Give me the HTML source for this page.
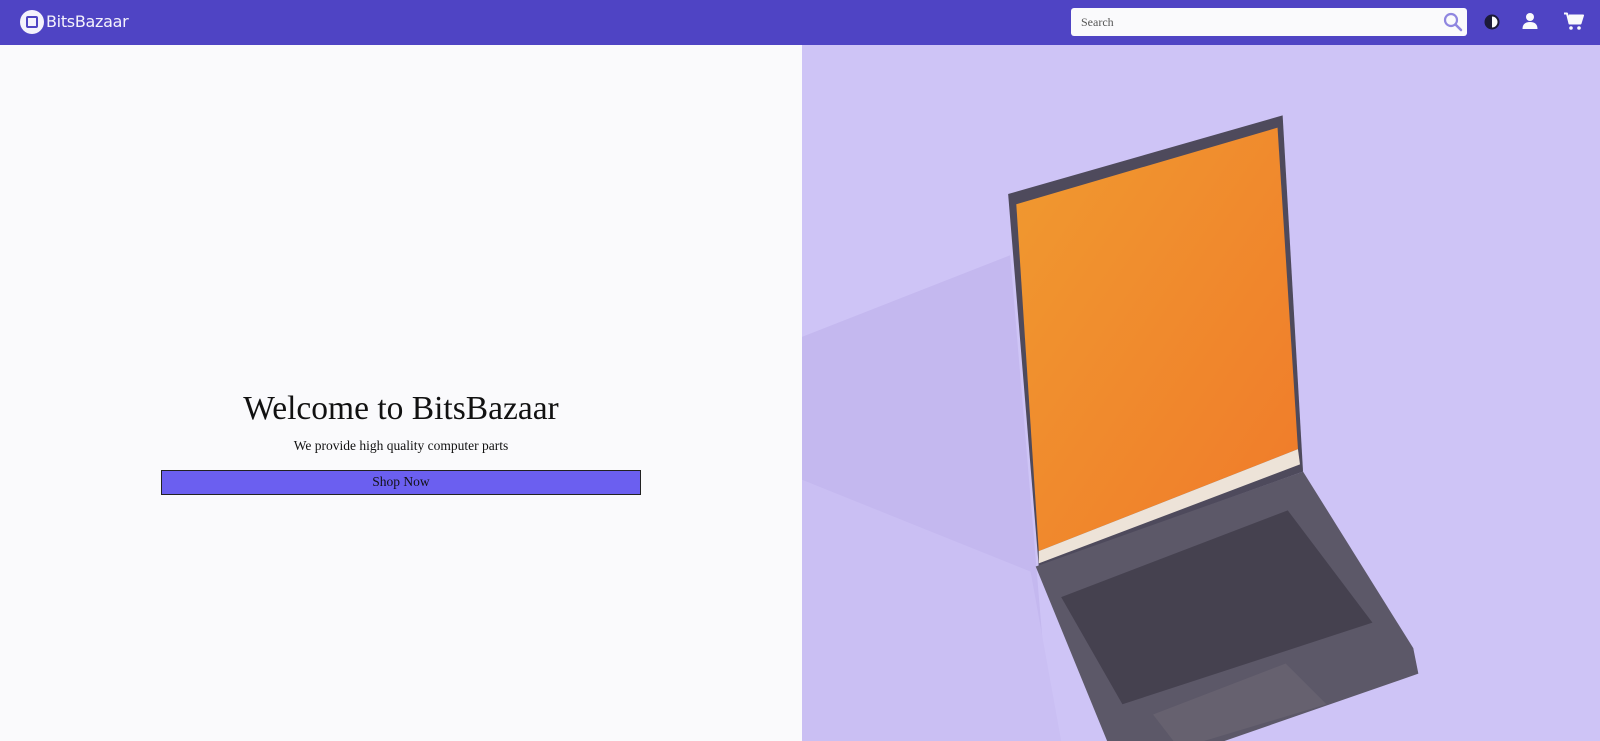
<!DOCTYPE html>
<html><head><meta charset="utf-8"><style>
*{margin:0;padding:0;box-sizing:border-box}
body{width:1600px;height:741px;overflow:hidden;background:#fafafc;font-family:"Liberation Serif",serif;position:relative}
.nav{position:absolute;left:0;top:0;width:1600px;height:45px;background:#4f44c4}
.logo{position:absolute;left:20px;top:10px;width:24px;height:24px;border-radius:50%;background:#f4f2fc}
.logo i{position:absolute;left:6px;top:6px;width:12px;height:12px;border:2px solid #4f44c4;border-radius:2px}
.brand{position:absolute;left:46px;top:12px;color:#f4f2fc;font:16px "DejaVu Sans","Liberation Sans",sans-serif;letter-spacing:-0.3px}
.search{position:absolute;left:1071px;top:8px;width:396px;height:28px;background:#fafafc;border-radius:3px}
.search span{position:absolute;left:10px;top:7px;font-size:12px;color:#555}
h1{position:absolute;left:0;width:802px;top:389px;text-align:center;font-weight:normal;font-size:33.5px;line-height:40px;color:#111}
p{position:absolute;left:0;width:802px;top:438px;text-align:center;font-size:13.5px;line-height:16px;color:#111}
.btn{position:absolute;left:161px;top:470px;width:480px;height:25px;background:#6b5ff0;border:1.5px solid #222;text-align:center;font-size:13.5px;line-height:22px;color:#111}
svg.hero{position:absolute;left:802px;top:45px}
</style></head><body>
<div class="nav">
<div class="logo"><i></i></div><div class="brand">BitsBazaar</div>
<div class="search"><span>Search</span>
<svg style="position:absolute;right:4px;top:4px" width="20" height="20" viewBox="0 0 20 20"><circle cx="8" cy="8" r="6" fill="none" stroke="#8f86e0" stroke-width="2.2"/><path d="M12.5 12.5L18 18" stroke="#8f86e0" stroke-width="2.5" stroke-linecap="round"/></svg></div>
<svg style="position:absolute;left:1483px;top:13px" width="18" height="18" viewBox="0 0 18 18"><circle cx="9" cy="9" r="7.5" fill="#1c1a3a"/><path d="M9 3.5a5.5 5.5 0 0 1 0 11z" fill="#fafafc"/></svg>
<svg style="position:absolute;left:1521px;top:12px" width="18" height="18" viewBox="0 0 18 18"><circle cx="9" cy="5" r="4" fill="#fafafc"/><path d="M1.5 17c0-5 3-7 7.5-7s7.5 2 7.5 7z" fill="#fafafc"/></svg>
<svg style="position:absolute;left:1564px;top:12px" width="20" height="19" viewBox="0 0 20 19"><path d="M0 1.5h3l2.5 10h11l2.5-8H5" fill="#fafafc" stroke="#fafafc" stroke-width="2" stroke-linejoin="round"/><circle cx="7" cy="16" r="1.8" fill="#fafafc"/><circle cx="15" cy="16" r="1.8" fill="#fafafc"/></svg>
</div>
<h1>Welcome to BitsBazaar</h1>
<p>We provide high quality computer parts</p>
<div class="btn">Shop Now</div>
<svg class="hero" width="798" height="696" viewBox="786 44 782 682" preserveAspectRatio="none">
<defs><linearGradient id="sc" x1="0" y1="0" x2="1" y2="1"><stop offset="0" stop-color="#f09a30"/><stop offset="1" stop-color="#f07a2a"/></linearGradient></defs>
<rect x="786" y="44" width="782" height="682" fill="#cec4f6"/>
<polygon points="786,330 990,250 1030,726 786,726" fill="#c4b8ef"/>
<polygon points="786,470 1010,560 1040,726 786,726" fill="#cabff3"/>
<polygon points="988,190 1257,113 1277,462 1018,555" fill="#4e4a5c"/>
<polygon points="996,200 1252,125 1272,440 1018,540" fill="url(#sc)"/>
<polygon points="1018,540 1272,440 1274,455 1018,552" fill="#ede3d8"/>
<polygon points="1015,555 1277,462 1385,635 1390,660 1200,726 1085,726" fill="#5c5868"/>
<polygon points="1040,585 1262,500 1345,610 1100,690" fill="#45414f"/>
<polygon points="1130,700 1260,650 1300,690 1180,726 1150,726" fill="#66616f"/>
</svg>
</body></html>
